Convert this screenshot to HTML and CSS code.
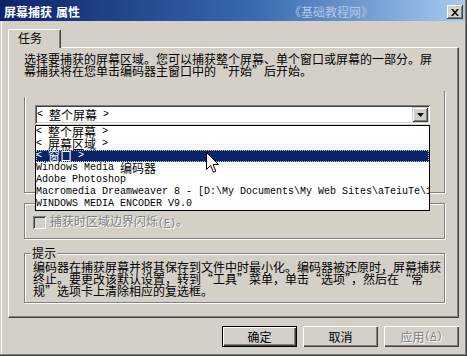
FILE: index.html
```html
<!DOCTYPE html>
<html lang="zh-CN">
<head>
<meta charset="utf-8">
<title>屏幕捕获 属性</title>
<link rel="stylesheet" href="styles.css">
</head>
<body>
<div class="window">
  <div class="titlebar">
    <span class="title">屏幕捕获<span class="gap">属性</span></span>
    <span class="close"><svg width="8" height="7" viewBox="0 0 8 7"><path d="M0 0h2l2 2.4 2-2.4h2l-3 3.5 3 3.5h-2l-2-2.4-2 2.4h-2l3-3.5z" fill="#000"/></svg></span>
  </div>
  <span class="watermark">《基础教程网》</span>

  <div class="tabs"><div class="tab">任务</div></div>

  <div class="panel">
    <p class="intro">选择要捕获的屏幕区域。您可以捕获整个屏幕、单个窗口或屏幕的一部分。屏<br>幕捕获将在您单击编码器主窗口中的“开始”后开始。</p>

    <div class="group g1">
      <div class="combo">
        <div class="combo-val">&lt; <span class="c">整个屏幕</span> &gt;</div>
        <div class="combo-btn"><svg width="7" height="4" viewBox="0 0 7 4"><path d="M0 0h7L3.5 4z" fill="#000"/></svg></div>
      </div>
    </div>

    <div class="group g2">
      <div class="check">
        <span class="box"></span>
        <span class="label disabled">捕获时区域边界闪烁<span class="lat">(<u>F</u>)</span>。</span>
      </div>
    </div>

    <div class="group g3">
      <span class="legend">提示</span>
      <p class="tip">编码器在捕获屏幕并将其保存到文件中时最小化。编码器被还原时，屏幕捕获<br>终止。要更改该默认设置，转到“工具”菜单，单击“选项”，然后在“常<br>规”选项卡上清除相应的复选框。</p>
    </div>
  </div>

  <div class="buttons">
    <div class="btn default">确定</div>
    <div class="btn">取消</div>
    <div class="btn disabled">应用<span class="lat">(<u>A</u>)</span></div>
  </div>

  <div class="dropdown">
    <div class="item">&lt; <span class="c">整个屏幕</span> &gt;</div>
    <div class="item">&lt; <span class="c">屏幕区域</span> &gt;</div>
    <div class="item sel">&lt; <span class="c">窗口</span> &gt;</div>
    <div class="item">Windows Media <span class="c">编码器</span></div>
    <div class="item">Adobe Photoshop</div>
    <div class="item">Macromedia Dreamweaver 8 - [D:\My Documents\My Web Sites\aTeiuTe\1]</div>
    <div class="item">WINDOWS MEDIA ENCODER V9.0</div>
  </div>

  <svg class="cursor" width="13" height="21" viewBox="0 0 13 21"><path d="M0.5 0.5V17.5L4.5 13.5L7.5 20.2L9.8 19.2L7 12.5H12.5Z" fill="#fff" stroke="#000" stroke-width="1"/></svg>
</div>
</body>
</html>
```
FILE: styles.css
```css
* { box-sizing: border-box; }
html, body { margin: 0; padding: 0; }
body {
  background: #d4d0c8;
  font-family: "Noto Sans CJK SC", "Noto Sans CJK JP", sans-serif;
  font-size: 12px;
  line-height: 12px;
  color: #000;
}
.window {
  position: relative;
  width: 467px;
  height: 356px;
  padding: 0 2px 2px 0;
  background: #d4d0c8;
  overflow: hidden;
  box-shadow: inset -1px -1px 0 #404040, inset -2px -2px 0 #808080, inset 1px 0 0 #d4d0c8, inset 2px 0 0 #fff;
}
.titlebar {
  display: flex;
  align-items: flex-start;
  height: 21px;
  background: linear-gradient(to right, #0a246a 0%, #3a6ab0 55%, #a6caf0 100%);
  color: #fff;
}
.title {
  margin: 6px 0 0 4px;
  font-weight: bold;
  white-space: nowrap;
}
.gap { margin-left: 4px; }
.watermark {
  position: absolute;
  left: 289px;
  top: 6px;
  color: #b4c6e2;
  white-space: nowrap;
}
.close {
  display: flex;
  align-items: center;
  justify-content: center;
  width: 16px;
  height: 14px;
  margin: 5px 2px 0 auto;
  background: #d4d0c8;
  box-shadow: inset -1px -1px 0 #404040, inset 1px 1px 0 #fff, inset -2px -2px 0 #808080;
}
.tabs {
  display: flex;
  padding: 8px 0 0 8px;
}
.tab {
  position: relative;
  z-index: 1;
  width: 53px;
  height: 19px;
  margin-bottom: -1px;
  padding: 2px 0 0 9px;
  background: #d4d0c8;
  border-top: 1px solid #fff;
  border-left: 1px solid #fff;
  border-right: 1px solid #404040;
  border-top-left-radius: 2px;
  border-top-right-radius: 2px;
  box-shadow: inset -1px 0 0 #808080;
}
.panel {
  position: relative;
  width: 451px;
  height: 271px;
  margin-left: 8px;
  padding: 5px 0 0 15px;
  border-top: 1px solid #fff;
  border-left: 1px solid #fff;
  border-right: 1px solid #404040;
  border-bottom: 1px solid #404040;
  box-shadow: inset -1px -1px 0 #808080;
}
.intro, .tip {
  margin: 0;
  white-space: nowrap;
  font-feature-settings: "fwid";
}
.group {
  position: relative;
  width: 421px;
  border: 1px solid #808080;
  box-shadow: 1px 1px 0 #fff, inset 1px 1px 0 #fff;
}
.g1 {
  margin-top: 14px;
  height: 102px;
  border-top: 0;
  border-left: 0;
  padding: 14px 0 0 11px;
  box-shadow: 1px 1px 0 #fff;
}
.g1::before {
  content: "";
  position: absolute;
  left: 0;
  top: 6px;
  bottom: 0;
  width: 1px;
  background: #808080;
  box-shadow: 1px 0 0 #fff;
}
.combo {
  display: flex;
  width: 395px;
  height: 19px;
  padding: 2px;
  background: #fff;
  box-shadow: inset 1px 1px 0 #808080, inset -1px -1px 0 #fff, inset 2px 2px 0 #404040, inset -2px -2px 0 #d4d0c8;
}
.combo-val {
  flex: 1;
  height: 15px;
  padding-top: 2px;
  font-family: "Liberation Mono", monospace;
  font-size: 10px;
  line-height: 12px;
  white-space: nowrap;
}
.c {
  display: inline-block;
  height: 12px;
  font-family: "Noto Sans CJK SC", sans-serif;
  font-size: 12px;
  line-height: 12px;
  vertical-align: top;
}
.combo-btn {
  display: flex;
  align-items: center;
  justify-content: center;
  width: 16px;
  height: 15px;
  padding-top: 1px;
  background: #d4d0c8;
  box-shadow: inset 1px 1px 0 #d4d0c8, inset -1px -1px 0 #404040, inset 2px 2px 0 #fff, inset -2px -2px 0 #808080;
}
.g2 {
  margin-top: 10px;
  height: 36px;
  padding: 11px 0 0 8px;
}
.check {
  display: flex;
  align-items: center;
}
.box {
  width: 13px;
  height: 13px;
  background: #d4d0c8;
  box-shadow: inset 1px 1px 0 #808080, inset -1px -1px 0 #fff, inset 2px 2px 0 #404040, inset -2px -2px 0 #d4d0c8;
}
.label { margin-left: 4px; white-space: nowrap; }
.disabled {
  color: #808080;
  text-shadow: 1px 1px 0 #fff;
}
.lat {
  font-family: "Liberation Mono", monospace;
  font-size: 10px;
}
.g3 {
  margin-top: 14px;
  height: 50px;
  padding: 7px 0 0 8px;
}
.legend {
  position: absolute;
  left: 6px;
  top: -7px;
  padding: 0 1px;
  background: #d4d0c8;
}
.buttons {
  display: flex;
  justify-content: flex-end;
  gap: 6px;
  margin: 8px 6px 0 0;
}
.btn {
  display: flex;
  align-items: center;
  justify-content: center;
  width: 75px;
  height: 21px;
  background: #d4d0c8;
  box-shadow: inset 1px 1px 0 #fff, inset -1px -1px 0 #404040, inset -2px -2px 0 #808080;
}
.btn.default {
  border: 1px solid #000;
}
.dropdown {
  position: absolute;
  left: 35px;
  top: 125px;
  width: 395px;
  height: 86px;
  border: 1px solid #000;
  background: #fff;
  overflow: hidden;
}
.item {
  height: 12px;
  overflow: hidden;
  white-space: nowrap;
  font-family: "Liberation Mono", monospace;
  font-size: 10px;
  line-height: 12px;
}
.item.sel {
  background: #0a246a;
  color: #fff;
  outline: 1px dotted #c8c8c8;
  outline-offset: -1px;
}
.cursor {
  position: absolute;
  left: 206px;
  top: 152px;
}
```
